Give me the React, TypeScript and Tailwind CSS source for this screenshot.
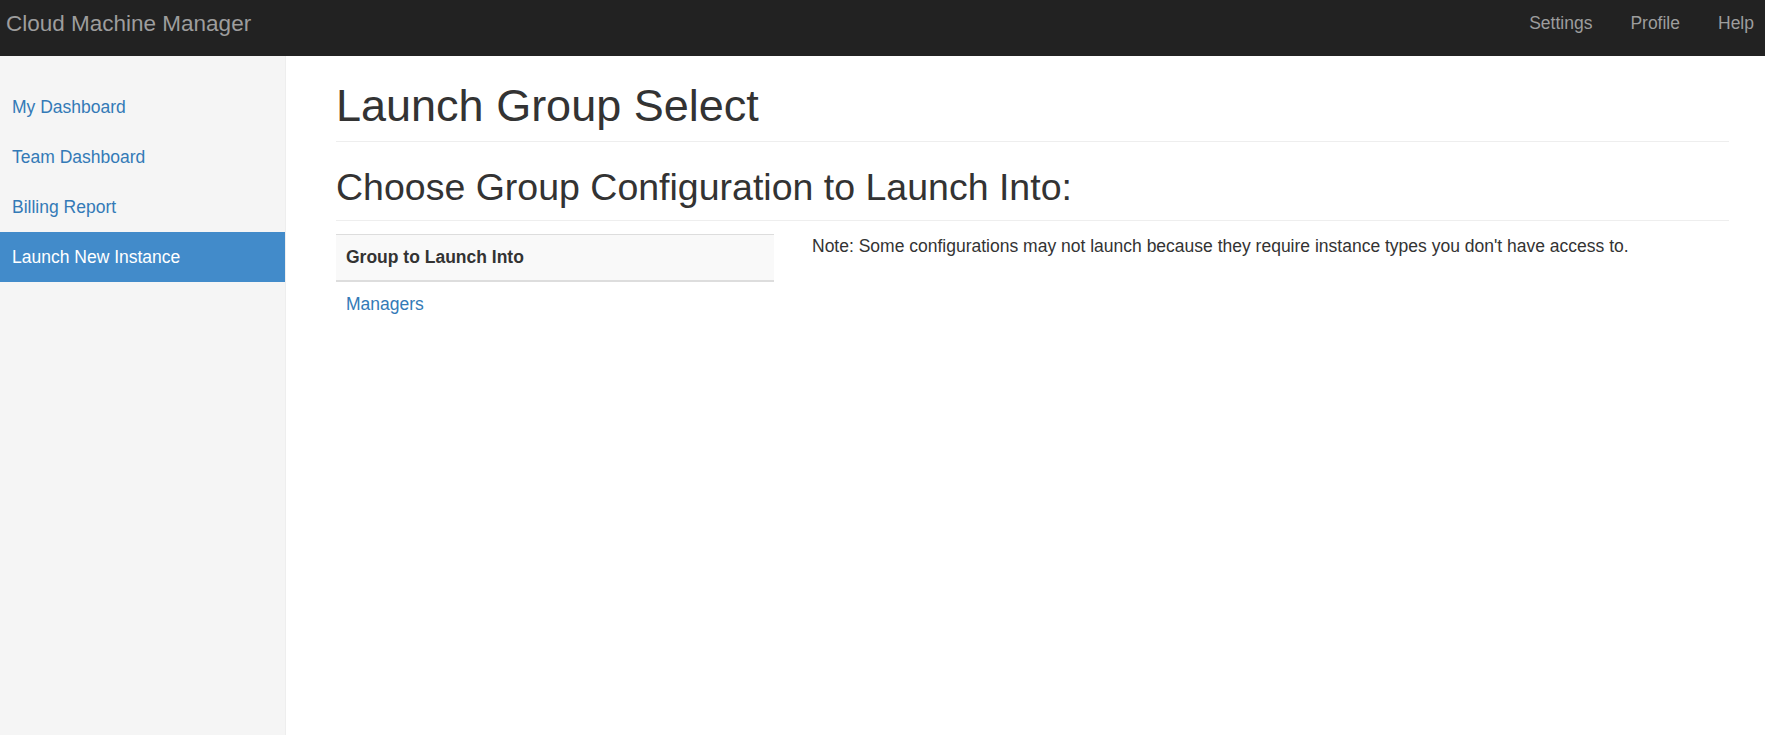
import React from "react";

const sideLinks = [
  { label: "My Dashboard", active: false },
  { label: "Team Dashboard", active: false },
  { label: "Billing Report", active: false },
  { label: "Launch New Instance", active: true },
];

function Navbar() {
  return (
    <div className="h-[56px] bg-[#222] flex items-start justify-between">
      <a className="pl-[6px] pt-[11px] text-[22.5px] leading-[25px] text-[#9d9d9d]">
        Cloud Machine Manager
      </a>
      <div className="flex gap-[38px] pr-[11px] pt-[11px]">
        {["Settings", "Profile", "Help"].map((item) => (
          <a key={item} className="text-[17.5px] leading-[25px] text-[#9d9d9d]">
            {item}
          </a>
        ))}
      </div>
    </div>
  );
}

function Sidebar() {
  return (
    <div className="w-[286px] shrink-0 bg-[#f5f5f5] border-r border-[#eee] pt-[26px]">
      {sideLinks.map((link) => (
        <a
          key={link.label}
          className={
            link.active
              ? "h-[50px] flex items-center pl-[12px] text-[17.5px] bg-[#428bca] text-white"
              : "h-[50px] flex items-center pl-[12px] text-[17.5px] text-[#337ab7]"
          }
        >
          {link.label}
        </a>
      ))}
    </div>
  );
}

export default function App() {
  return (
    <div
      className="min-h-screen flex flex-col bg-white text-[#333]"
      style={{ fontFamily: '"Liberation Sans", Arial, sans-serif' }}
    >
      <Navbar />
      <div className="flex flex-1">
        <Sidebar />

        <div className="flex-1 pl-[50px] pr-[36px]">
          {/* PAGE HEADER */}
          <h1 className="mt-[25px] pb-[10px] border-b border-[#eee] text-[45px] leading-[1.1] font-normal">
            Launch Group Select
          </h1>

          <h2 className="mt-[25px] pb-[12px] border-b border-[#eee] text-[37.5px] leading-[1.1] font-normal">
            Choose Group Configuration to Launch Into:
          </h2>

          <div className="flex gap-[38px] mt-[13px]">
            <table className="w-[438px] shrink-0 border-collapse text-[17.5px] leading-[25px]">
              <thead>
                <tr className="bg-[#f9f9f9]">
                  <th className="text-left font-bold px-[10px] py-[10px] border-t border-b-2 border-[#ddd]">
                    Group to Launch Into
                  </th>
                </tr>
              </thead>
              <tbody>
                <tr>
                  <td className="px-[10px] py-[10px]">
                    <a className="text-[#337ab7]">Managers</a>
                  </td>
                </tr>
              </tbody>
            </table>

            <p className="text-[17.5px] leading-[25px]">
              Note: Some configurations may not launch because they require instance types you
              don't have access to.
            </p>
          </div>
        </div>
      </div>
    </div>
  );
}
